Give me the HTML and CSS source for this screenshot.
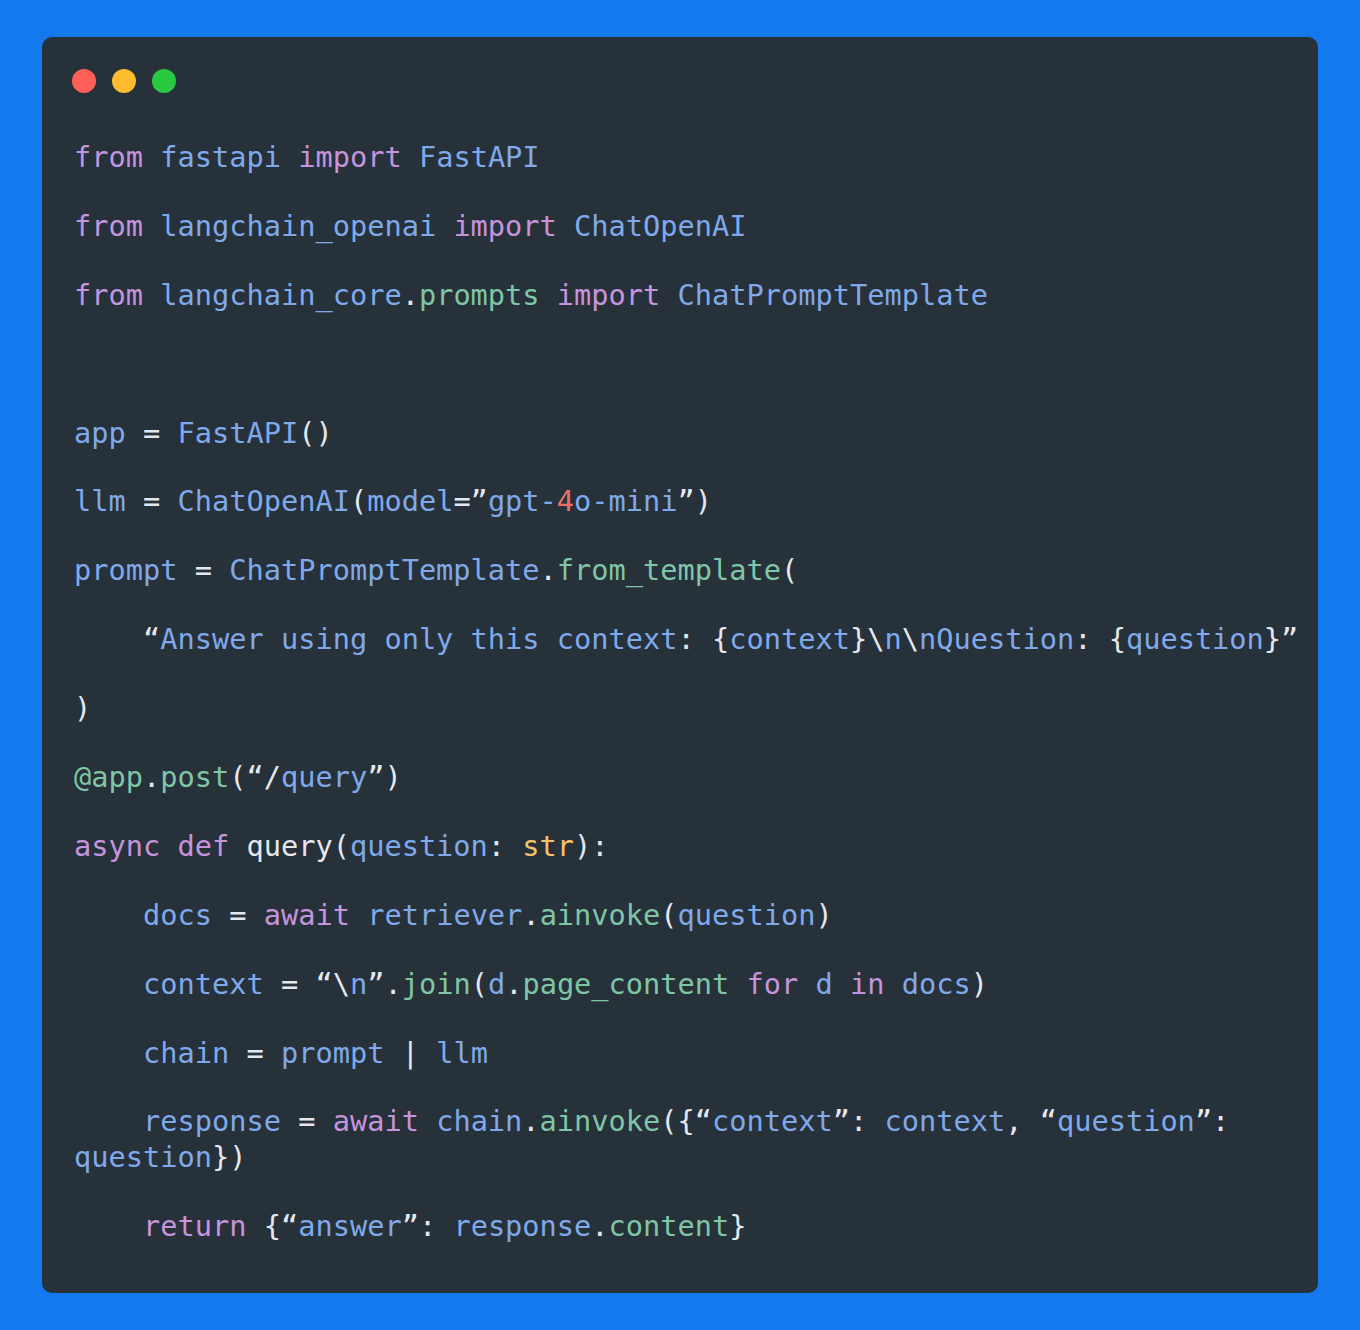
FILE: index.html
```html
<!DOCTYPE html>
<html lang="en">
<head>
<meta charset="utf-8">
<title>FastAPI RAG snippet</title>
<link rel="stylesheet" href="styles.css">
</head>
<body>
<main class="page">
<section class="card">
<div class="dots"><span class="dot red"></span><span class="dot yellow"></span><span class="dot green"></span></div>
<div class="code">
<div class="line"><span class="k">from</span> <span class="v">fastapi</span> <span class="k">import</span> <span class="v">FastAPI</span></div>
<div class="line"><span class="k">from</span> <span class="v">langchain_openai</span> <span class="k">import</span> <span class="v">ChatOpenAI</span></div>
<div class="line"><span class="k">from</span> <span class="v">langchain_core</span>.<span class="f">prompts</span> <span class="k">import</span> <span class="v">ChatPromptTemplate</span></div>
<div class="line"></div>
<div class="line"><span class="v">app</span> = <span class="v">FastAPI</span>()</div>
<div class="line"><span class="v">llm</span> = <span class="v">ChatOpenAI</span>(<span class="v">model</span>=”<span class="v">gpt-</span><span class="n">4</span><span class="v">o-mini</span>”)</div>
<div class="line"><span class="v">prompt</span> = <span class="v">ChatPromptTemplate</span>.<span class="f">from_template</span>(</div>
<div class="line">    “<span class="v">Answer using only this context</span>: {<span class="v">context</span>}\<span class="v">n</span>\<span class="v">nQuestion</span>: {<span class="v">question</span>}”</div>
<div class="line">)</div>
<div class="line"><span class="f">@app</span>.<span class="f">post</span>(“/<span class="v">query</span>”)</div>
<div class="line"><span class="k">async</span> <span class="k">def</span> query(<span class="v">question</span>: <span class="t">str</span>):</div>
<div class="line">    <span class="v">docs</span> = <span class="k">await</span> <span class="v">retriever</span>.<span class="f">ainvoke</span>(<span class="v">question</span>)</div>
<div class="line">    <span class="v">context</span> = “\<span class="v">n</span>”.<span class="f">join</span>(<span class="v">d</span>.<span class="f">page_content</span> <span class="k">for</span> <span class="v">d</span> <span class="k">in</span> <span class="v">docs</span>)</div>
<div class="line">    <span class="v">chain</span> = <span class="v">prompt</span> | <span class="v">llm</span></div>
<div class="line">    <span class="v">response</span> = <span class="k">await</span> <span class="v">chain</span>.<span class="f">ainvoke</span>({“<span class="v">context</span>”: <span class="v">context</span>, “<span class="v">question</span>”: <span class="v">question</span>})</div>
<div class="line">    <span class="k">return</span> {“<span class="v">answer</span>”: <span class="v">response</span>.<span class="f">content</span>}</div>
</div>
</section>
</main>
</body>
</html>
```

FILE: styles.css
```css
html, body {
  margin: 0;
  padding: 0;
}

body {
  background: #1478ef;
  min-height: 1330px;
}

.page {
  padding: 37px 42px 37px 42px;
}

.card {
  background: #26313a;
  border-radius: 10px;
  height: 1256px;
  box-sizing: border-box;
  padding: 32px 10px 0 30px;
}

.dots {
  display: flex;
  gap: 16px;
  height: 24px;
}

.dot {
  width: 24px;
  height: 24px;
  border-radius: 50%;
  display: block;
}

.dot.red { background: #fe5f57; }
.dot.yellow { background: #febc2e; }
.dot.green { background: #28c840; }

.code {
  margin-top: 46px;
  display: flex;
  flex-direction: column;
  gap: 32.9px;
  font-family: "DejaVu Sans Mono", "Liberation Mono", monospace;
  font-size: 28.65px;
  line-height: 36px;
  color: #e4e8ee;
  padding-left: 2px;
}

.line {
  white-space: pre-wrap;
  min-height: 36px;
}

.k { color: #c594dc; }
.v { color: #80a9ea; }
.f { color: #7fc6a6; }
.t { color: #f4c26a; }
.n { color: #ef6f68; }
```
